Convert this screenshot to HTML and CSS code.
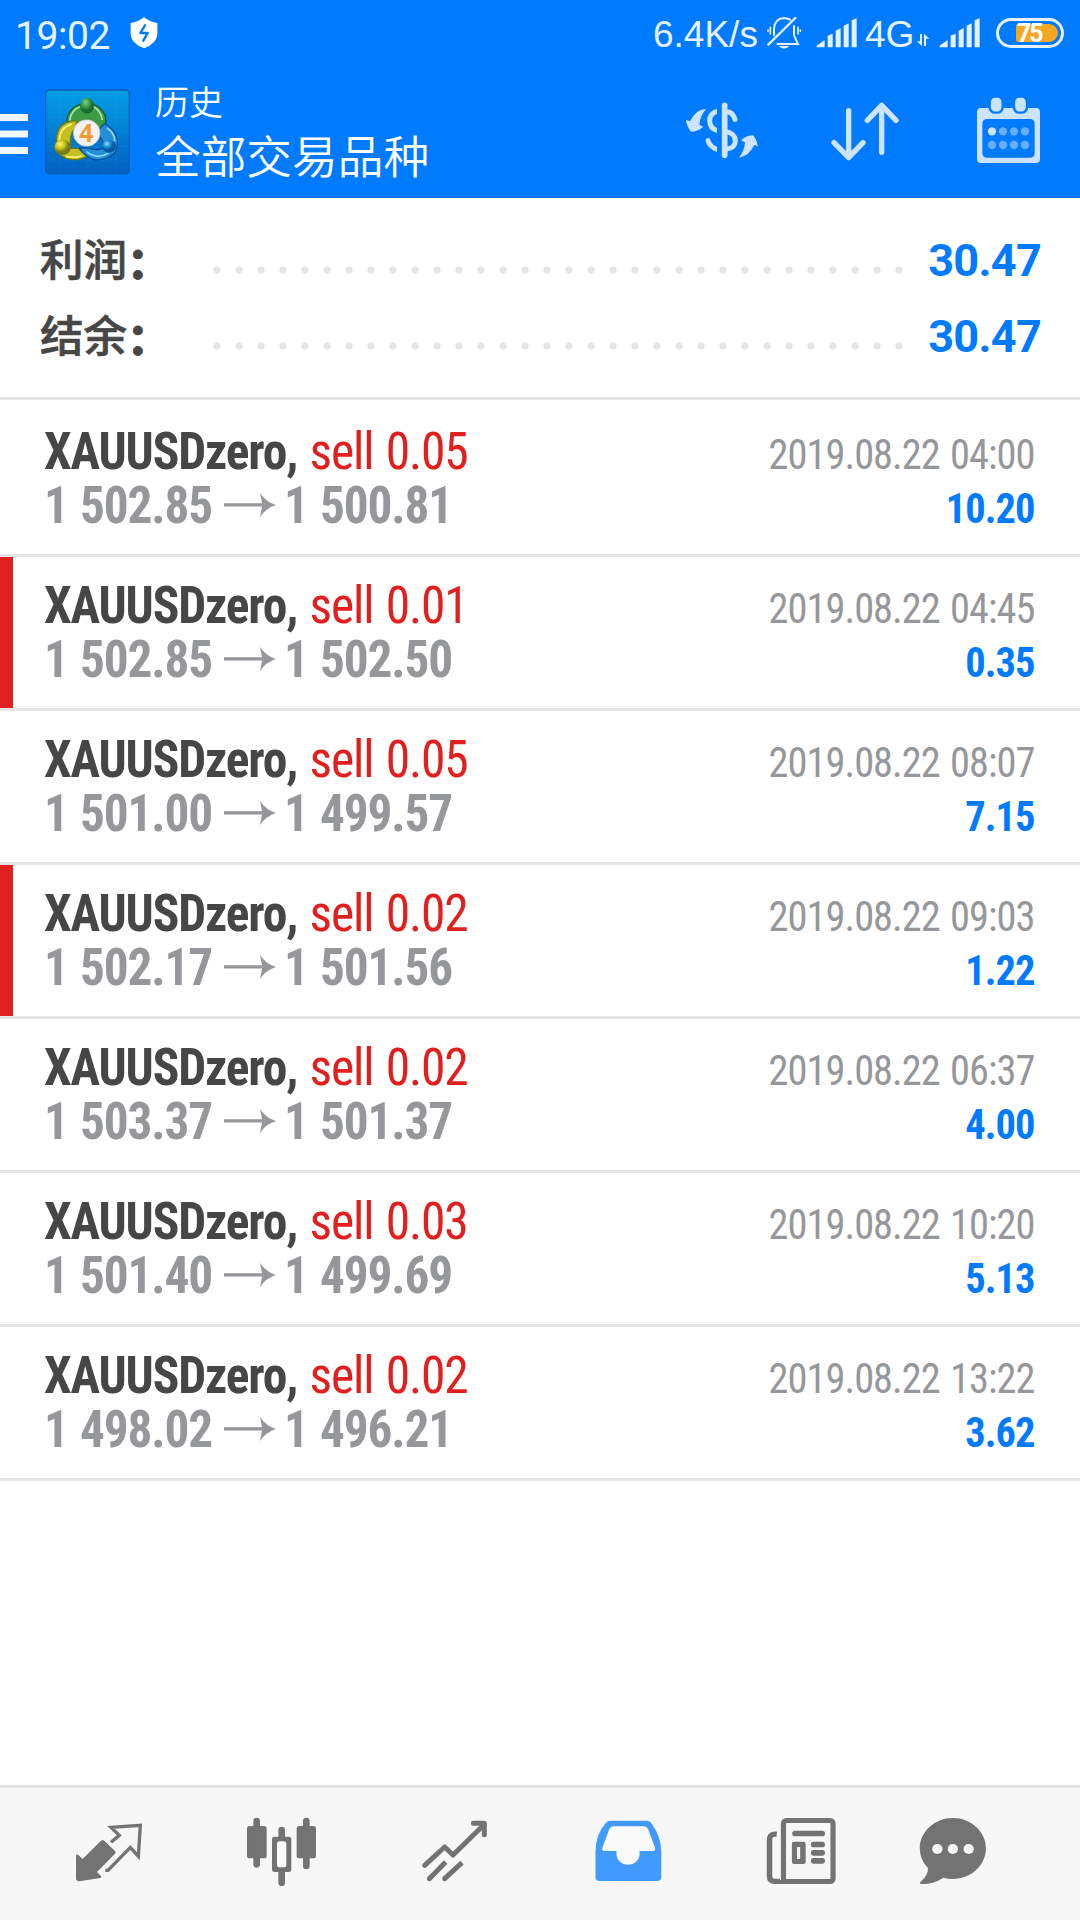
FILE: index.html
```html
<!DOCTYPE html>
<html lang="zh-CN">
<head>
<meta charset="utf-8">
<title>历史</title>
<link rel="stylesheet" href="styles.css">
</head>
<body>
<header class="top">
  <div class="status">
    <span class="clock">19:02</span>
    <svg class="shield" width="28" height="32" viewBox="390 51 84 96"><path d="M432 52Q450 66 472 69V103Q470 131 432 145Q394 131 392 103V69Q414 66 432 52Z" fill="#fff"/><path d="M435 76L421 99H443L430 122" fill="none" stroke="#007aff" stroke-width="7" stroke-linecap="round" stroke-linejoin="round"/></svg>
    <span class="speed">6.4K/s</span>
    <svg class="bell" width="36" height="34" viewBox="378 48 108 102" fill="none" stroke="#e6f2ff" stroke-width="6" stroke-linecap="round"><path d="M402 106V86Q404 56 432 54Q442 54 450 59M462 78V106L474 132H412"/><path d="M385 134L466 54" stroke-width="7"/><path d="M391 82V101M384 90V94M474 82V101M481 90V94" stroke-width="5"/><path d="M416 138H448Q432 154 416 138Z" fill="#e6f2ff" stroke="none"/></svg>
    <svg class="signal" width="42" height="30" viewBox="529 53 126 90" fill="#e6f2ff"><path d="M531 141V136L555 119V141ZM564 106L579 100V141H564ZM588 91L603 83V141H588ZM612 76L627 69V141H612ZM636 60L651 54V141H636Z"/></svg>
    <span class="net">4G</span>
    <svg class="updown" width="14" height="14" viewBox="830 99 42 42" fill="#e6f2ff"><path d="M842 102H848V138L832 124H842ZM854 138V101L870 116H860V138Z"/></svg>
    <svg class="signal signal-2" width="42" height="30" viewBox="529 53 126 90" fill="#e6f2ff"><path d="M531 141V136L555 119V141ZM564 106L579 100V141H564ZM588 91L603 83V141H588ZM612 76L627 69V141H612ZM636 60L651 54V141H636Z"/></svg>
    <div class="battery"><span class="charge">75</span></div>
  </div>
  <div class="appbar">
    <svg class="menu" width="28" height="42" viewBox="0 0 28 42"><path d="M0 1H28V8H0ZM0 17.500H28V24.500H0ZM0 34H28V41H0Z" fill="#f0f7ff"/></svg>
    <svg class="logo" width="86" height="86" viewBox="48 27 258 258">
      <defs>
        <linearGradient id="tile" x1="0" y1="0" x2="0" y2="1"><stop offset="0" stop-color="#049ee8"/><stop offset="1" stop-color="#0060c0"/></linearGradient>
        <radialGradient id="green" cx=".4" cy=".3"><stop offset="0" stop-color="#82d184"/><stop offset=".6" stop-color="#359a45"/><stop offset="1" stop-color="#176d31"/></radialGradient>
        <radialGradient id="yellow" cx=".35" cy=".3"><stop offset="0" stop-color="#fff66c"/><stop offset=".6" stop-color="#c5bb18"/><stop offset="1" stop-color="#777b16"/></radialGradient>
        <radialGradient id="blue" cx=".35" cy=".3"><stop offset="0" stop-color="#8ddcff"/><stop offset=".6" stop-color="#1782cf"/><stop offset="1" stop-color="#0756a5"/></radialGradient>
      </defs>
      <rect x="50" y="30" width="251" height="251" rx="11" fill="url(#tile)" stroke="#075eaf" stroke-width="4"/>
      <path d="M93 33V278M135 33V278M177 33V278M219 33V278M261 33V278M53 72H297M53 114H297M53 156H297M53 198H297M53 240H297" stroke="#55c7ef" stroke-opacity=".16" stroke-width="2"/>
      <g stroke-linejoin="round">
        <path d="M123 152Q108 132 117 105Q130 77 163 70H185Q218 78 229 108Q236 137 212 168L194 177L186 128Q178 118 166 122Q148 126 140 140Z" fill="#3c9b44" stroke="#145d32" stroke-width="4"/>
        <path d="M122 122Q126 88 159 78M190 78Q216 91 220 120" fill="none" stroke="#b2e5a8" stroke-width="5"/>
        <path d="M144 122Q107 123 91 145Q80 166 83 193L94 224Q112 240 146 239L176 229Q160 220 149 205H124V180Q126 154 139 145Z" fill="#c6bf20" stroke="#687b16" stroke-width="4"/>
        <path d="M91 181Q91 144 128 132M110 229Q132 236 160 228" fill="none" stroke="#fff47a" stroke-width="5"/>
        <path d="M226 132Q252 143 263 170Q270 198 257 219Q235 240 198 240Q168 230 151 204L178 204Q202 214 221 205V182Q210 171 205 153Z" fill="#248fd8" stroke="#075097" stroke-width="4"/>
        <path d="M234 144Q257 158 257 184M172 215Q203 240 238 220" fill="none" stroke="#8bd9fb" stroke-width="5"/>
      </g>
      <ellipse cx="174" cy="77" rx="21" ry="24" fill="url(#green)"/>
      <ellipse cx="101" cy="202" rx="25" ry="23" fill="url(#yellow)"/>
      <ellipse cx="240" cy="199" rx="21" ry="19" fill="url(#blue)"/>
      <circle cx="173" cy="159" r="40" fill="#f1f2f6" stroke="#b4bdc8" stroke-width="2"/>
      <text x="172" y="185" text-anchor="middle" class="logo-num">4</text>
    </svg>
    <div class="titles"><div class="title">历史</div><div class="subtitle">全部交易品种</div></div>
    <svg class="act" width="76" height="76" viewBox="135 282 228 228"><g fill="none" stroke="#cce4ff" stroke-linecap="round"><path d="M257 335Q278 334 285 358M257 394Q286 400 286 423Q285 445 261 447" stroke-width="15"/><path d="M231 334Q209 340 209 362Q209 385 231 391M204 422Q209 440 231 448" stroke-width="15"/></g><path d="M231 320H245V460H231Z" fill="#007aff"/><path d="M254 316V466" stroke="#cce4ff" stroke-width="17" stroke-linecap="round"/><path d="M196 327Q166 329 150 364L138 360Q140 380 153 395Q173 395 190 380L178 374Q181 347 198 328ZM297 473Q326 469 343 435L354 439Q351 420 340 406Q322 405 303 421L315 427Q314 451 297 473Z" fill="#cce4ff"/></svg>
    <svg class="act act-sort" width="76" height="76" viewBox="564 282 228 228" fill="none" stroke="#cce4ff" stroke-width="16" stroke-linecap="round" stroke-linejoin="round"><path d="M626 332V472M582 428L626 473L669 428M725 457V317M682 361L725 316L768 361"/></svg>
    <svg class="act act-cal" width="76" height="76" viewBox="1002 282 228 228"><path fill="#cce4ff" fill-rule="evenodd" d="M1023 324H1188Q1200 324 1200 336V477Q1200 489 1188 489H1023Q1011 489 1011 477V336Q1011 324 1023 324ZM1042 357Q1027 357 1027 372V458Q1027 473 1042 473H1169Q1184 473 1184 458V372Q1184 357 1169 357Z"/><g fill="#cce4ff" stroke="#007aff" stroke-width="7"><rect x="1049" y="290" width="39" height="48" rx="16"/><rect x="1122" y="290" width="39" height="48" rx="16"/></g><circle cx="1056" cy="394" r="12.500" fill="#cce4ff"/><g fill="#66afff"><circle cx="1089" cy="394" r="12.500"/><circle cx="1122" cy="394" r="12.500"/><circle cx="1155" cy="394" r="12.500"/><circle cx="1056" cy="435" r="12.500"/><circle cx="1089" cy="435" r="12.500"/><circle cx="1122" cy="435" r="12.500"/><circle cx="1155" cy="435" r="12.500"/></g></svg>
  </div>
</header>

<section class="summary">
  <div class="sum-row"><span class="label">利润<span class="colon">：</span></span><span class="dots"></span><span class="total">30.47</span></div>
  <div class="sum-row"><span class="label">结余<span class="colon">：</span></span><span class="dots"></span><span class="total">30.47</span></div>
</section>

<main class="deals">
  <article class="deal"><div class="left"><div class="name"><b>XAUUSDzero,</b> <span class="side">sell 0.05</span></div><div class="price"><span class="open">1 502.85</span><svg class="arrow" width="52" height="24" viewBox="0 0 52 24"><path d="M0 10.300H38L36 0Q42 9 52 12Q42 15 36 24L38 13.500H0Z"/></svg><span class="close">1 500.81</span></div></div><div class="right"><div class="time">2019.08.22 04:00</div><div class="profit">10.20</div></div></article>
  <article class="deal marked"><div class="left"><div class="name"><b>XAUUSDzero,</b> <span class="side">sell 0.01</span></div><div class="price"><span class="open">1 502.85</span><svg class="arrow" width="52" height="24" viewBox="0 0 52 24"><path d="M0 10.300H38L36 0Q42 9 52 12Q42 15 36 24L38 13.500H0Z"/></svg><span class="close">1 502.50</span></div></div><div class="right"><div class="time">2019.08.22 04:45</div><div class="profit">0.35</div></div></article>
  <article class="deal"><div class="left"><div class="name"><b>XAUUSDzero,</b> <span class="side">sell 0.05</span></div><div class="price"><span class="open">1 501.00</span><svg class="arrow" width="52" height="24" viewBox="0 0 52 24"><path d="M0 10.300H38L36 0Q42 9 52 12Q42 15 36 24L38 13.500H0Z"/></svg><span class="close">1 499.57</span></div></div><div class="right"><div class="time">2019.08.22 08:07</div><div class="profit">7.15</div></div></article>
  <article class="deal marked"><div class="left"><div class="name"><b>XAUUSDzero,</b> <span class="side">sell 0.02</span></div><div class="price"><span class="open">1 502.17</span><svg class="arrow" width="52" height="24" viewBox="0 0 52 24"><path d="M0 10.300H38L36 0Q42 9 52 12Q42 15 36 24L38 13.500H0Z"/></svg><span class="close">1 501.56</span></div></div><div class="right"><div class="time">2019.08.22 09:03</div><div class="profit">1.22</div></div></article>
  <article class="deal"><div class="left"><div class="name"><b>XAUUSDzero,</b> <span class="side">sell 0.02</span></div><div class="price"><span class="open">1 503.37</span><svg class="arrow" width="52" height="24" viewBox="0 0 52 24"><path d="M0 10.300H38L36 0Q42 9 52 12Q42 15 36 24L38 13.500H0Z"/></svg><span class="close">1 501.37</span></div></div><div class="right"><div class="time">2019.08.22 06:37</div><div class="profit">4.00</div></div></article>
  <article class="deal"><div class="left"><div class="name"><b>XAUUSDzero,</b> <span class="side">sell 0.03</span></div><div class="price"><span class="open">1 501.40</span><svg class="arrow" width="52" height="24" viewBox="0 0 52 24"><path d="M0 10.300H38L36 0Q42 9 52 12Q42 15 36 24L38 13.500H0Z"/></svg><span class="close">1 499.69</span></div></div><div class="right"><div class="time">2019.08.22 10:20</div><div class="profit">5.13</div></div></article>
  <article class="deal"><div class="left"><div class="name"><b>XAUUSDzero,</b> <span class="side">sell 0.02</span></div><div class="price"><span class="open">1 498.02</span><svg class="arrow" width="52" height="24" viewBox="0 0 52 24"><path d="M0 10.300H38L36 0Q42 9 52 12Q42 15 36 24L38 13.500H0Z"/></svg><span class="close">1 496.21</span></div></div><div class="right"><div class="time">2019.08.22 13:22</div><div class="profit">3.62</div></div></article>
</main>

<nav class="tabs">
  <svg width="72" height="72" viewBox="129 108 216 216"><path d="M138 224Q141 222 145 225L158 237L213 182Q218 178 223 182L255 213Q259 217 255 221L201 276L213 288Q216 292 211 294L148 304Q138 304 138 294Z" fill="#737373"/><path d="M243 187L268 166L243 142L331 136L325 229L301 202L234 271L226 271" fill="none" stroke="#737373" stroke-width="10"/></svg>
  <svg width="72" height="72" viewBox="648 108 216 216" fill="#737373"><rect x="651" y="138" width="59" height="97" rx="8"/><rect x="670" y="113" width="20" height="150" rx="10"/><rect x="800" y="138" width="58" height="97" rx="8"/><rect x="819" y="113" width="20" height="155" rx="10"/><path d="M745 170V150A10 10 0 01765 150V170H776Q784 170 784 178V268Q784 276 776 276H765V308A10 10 0 01745 308V276H734Q726 276 726 268V178Q726 170 734 170Z"/><rect x="741" y="184" width="28" height="78" rx="8" fill="#fafafa"/></svg>
  <svg width="72" height="72" viewBox="1164 108 216 216" fill="none" stroke="#737373" stroke-width="15" stroke-linejoin="round"><path d="M1184 256L1244 201L1269 225L1358 138" stroke-linecap="round"/><path d="M1330 130H1363V164M1198 296L1199 295M1244 296L1245 295" stroke-linecap="round"/><path d="M1198 296L1247 246M1244 296L1296 248"/></svg>
  <svg width="74.400" height="72" preserveAspectRatio="none" viewBox="147 108 216 216"><path d="M203 122H309Q317 122 322 129Q351 170 351 215V291Q351 303 339 303H172Q160 303 160 291V215Q160 164 190 129Q195 122 203 122Z" fill="#419bff"/><path d="M213 139H299Q309 139 313 148L333 203Q335 213 325 213H288V221A33.500 33.500 0 01221 221V213H187Q177 212 180 203L200 148Q204 139 213 139Z" fill="#fafafa"/></svg>
  <svg width="74.400" height="72" preserveAspectRatio="none" viewBox="651 108 216 216"><path d="M688 163Q667 160 667 180V288Q667 304 683 304H712" fill="none" stroke="#737373" stroke-width="16"/><path d="M699 118V300" stroke="#f7f7f7" stroke-width="3"/><rect x="707.500" y="121.500" width="144" height="183" rx="9" fill="#f7f7f7" stroke="#737373" stroke-width="15"/><g fill="#737373"><rect x="733" y="152" width="95" height="17" rx="8"/><path fill-rule="evenodd" d="M739 185H765Q772 185 772 192V245Q772 252 765 252H739Q732 252 732 245V192Q732 185 739 185ZM747 201V237H756V201Z"/><rect x="787" y="185" width="41" height="17" rx="8"/><rect x="787" y="210" width="41" height="17" rx="8"/><rect x="787" y="234" width="41" height="17" rx="8"/></g></svg>
  <svg width="74.400" height="72" preserveAspectRatio="none" viewBox="1092 108 216 216"><path d="M1199 114C1252 114 1295 155 1295 205C1295 256 1252 297 1199 297Q1184 297 1172 293Q1140 314 1106 312Q1100 309 1106 305Q1127 287 1127 265Q1103 239 1103 205C1103 155 1146 114 1199 114Z" fill="#737373"/><g fill="#f7f7f7"><circle cx="1154" cy="207" r="15"/><circle cx="1199" cy="207" r="15"/><circle cx="1245" cy="207" r="15"/></g></svg>
</nav>
</body>
</html>
```

FILE: styles.css
```css
* { box-sizing: border-box; }
body {
  margin: 0;
  width: 1080px;
  height: 1920px;
  display: flex;
  flex-direction: column;
  background: #fff;
  font-family: Roboto, "Noto Sans CJK SC", sans-serif;
  overflow: hidden;
}
svg { display: block; flex: none; }

.top { height: 198px; background: #007aff; border-bottom: 2px solid #006ee6; }
.status { height: 68px; display: flex; align-items: flex-start; color: #e6f2ff; white-space: nowrap; }
.clock { width: 114px; margin: 12px 0 0 15px; font-size: 39px; line-height: 48px; font-weight: 370; letter-spacing: -.400px; }
.shield { margin: 17px 0 0 1px; }
.speed { width: 107px; margin: 11px 0 0 495px; font-family: "Liberation Sans", sans-serif; font-size: 37px; line-height: 48px; }
.bell { margin: 16px 0 0 6px; }
.signal { margin: 17.500px 0 0 14px; }
.net { width: 49px; margin: 11px 0 0 7px; font-family: "Liberation Sans", sans-serif; font-size: 37px; line-height: 48px; }
.updown { margin: 33px 0 0 2px; }
.signal-2 { margin-left: 9px; }
.battery { width: 68px; height: 30px; margin: 18px 0 0 15px; padding: 3px; border: 3px solid #e6f2ff; border-radius: 15px; display: flex; justify-content: flex-end; }
.charge { width: 42px; height: 18px; padding-left: 1px; border-radius: 2px 9px 9px 2px; background: #f5a623; color: #fff; font-size: 25px; line-height: 19px; font-weight: 700; letter-spacing: -2px; }

.appbar { height: 128px; display: flex; align-items: flex-start; }
.menu { margin-top: 45px; }
.logo { margin: 21px 0 0 17px; }
.logo-num { font: 700 74px "Noto Sans", sans-serif; fill: #f49a32; }
.titles { width: 545px; padding: 8px 0 0 24px; color: #fff; font-weight: 350; font-family: "Noto Sans CJK SC DemiLight", "Noto Sans CJK SC", sans-serif; }
.title { font-size: 34px; line-height: 49px; }
.subtitle { font-size: 45.700px; line-height: 59px; }
.act { margin: 26px 0 0 9px; }
.act-sort { margin-left: 67px; }
.act-cal { margin-left: 70px; }

.summary { height: 202px; padding: 24px 40px 0; border-bottom: 3px solid #e5e5e5; }
.sum-row { height: 76px; display: flex; align-items: center; }
.label { width: 166px; margin-top: -6px; font-size: 43.500px; font-weight: 500; -webkit-text-stroke: .700px #464646; color: #464646; white-space: nowrap; }
.colon { font-weight: 900; margin-left: 0; line-height: 0; vertical-align: -3px; }
.dots { width: 704px; height: 8px; margin-top: 19px; background: radial-gradient(circle at 11px 4px, #e5e5e5 3.200px, transparent 4px) 0 0 / 22px 8px repeat-x; }
.total { flex: 1; margin-right: -1px; text-align: right; font-size: 45px; font-weight: 700; letter-spacing: -.700px; color: #007aff; }

/* The list uses a face slightly narrower than the regular condensed cut. */
.deals { padding-top: 3px; flex: 1; font-family: "Roboto Condensed", Roboto, sans-serif; font-stretch: 75%; }
.deal { height: 154px; padding: 22px 44px 0; display: flex; justify-content: space-between; border-bottom: 3px solid #e5e5e5; white-space: nowrap; }
.marked { background: linear-gradient(#e21f1f, #e21f1f) 0 0 / 13px 151px no-repeat; }
.name, .price { font-size: 52px; line-height: 54px; letter-spacing: -1.200px; word-spacing: 2.300px; }
.name { color: #464646; transform: scaleX(.951); transform-origin: left; }
.side { color: #e21f1f; }
.price { display: flex; color: #96979b; font-weight: 700; }
.open, .close { display: block; transform: scaleX(.946); transform-origin: left; }
.open { width: 180px; }
.arrow { margin: 13.700px 8px 0 0; fill: #96979b; }
.right { padding: 3px 1.500px 0 0; text-align: right; font-size: 42px; line-height: 54px; letter-spacing: -1px; word-spacing: 2px; }
.time, .profit { transform: scaleX(.962); transform-origin: right; }
.time { color: #96979b; }
.profit { color: #007aff; font-weight: 700; }

.tabs { height: 135px; padding: 28px 0 0 73px; display: grid; grid-template-columns: 173px 172px 172.600px 173.600px 151.800px 75px; background: #f7f7f7; border-top: 3px solid #e5e5e5; }
```
